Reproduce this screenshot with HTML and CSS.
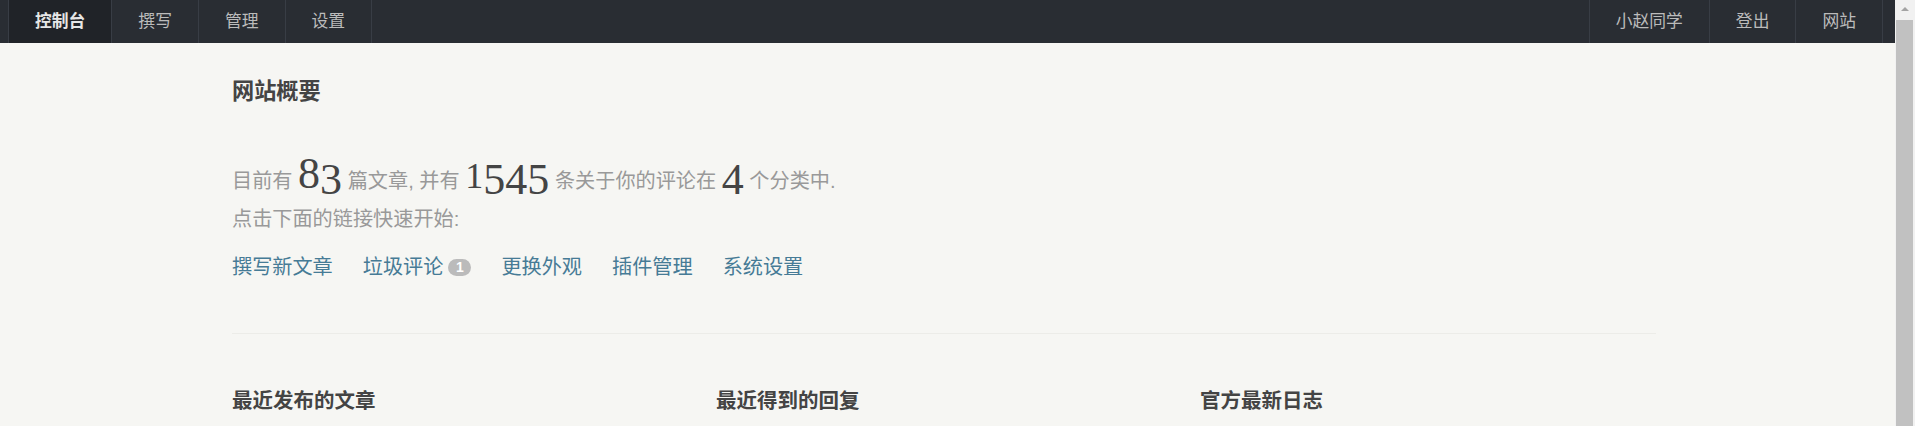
FILE: index.html
```html
<!DOCTYPE html>
<html lang="zh-CN">
<head>
<meta charset="utf-8">
<title>控制台</title>
<link rel="stylesheet" href="styles.css">
</head>
<body>
<div class="page">
  <header class="topnav">
    <ul class="nav-list">
      <li class="nav-item is-active"><a href="#">控制台</a></li>
      <li class="nav-item"><a href="#">撰写</a></li>
      <li class="nav-item"><a href="#">管理</a></li>
      <li class="nav-item"><a href="#">设置</a></li>
    </ul>
    <ul class="nav-list">
      <li class="nav-item"><a href="#">小赵同学</a></li>
      <li class="nav-item"><a href="#">登出</a></li>
      <li class="nav-item"><a href="#">网站</a></li>
    </ul>
  </header>
  <main class="container">
    <h2 class="page-title">网站概要</h2>
    <div class="welcome">
      <p class="welcome-line">目前有 <em class="stat">8<span class="os">3</span></em> 篇文章, 并有 <em class="stat"><span class="os-short">1</span><span class="os">545</span></em> 条关于你的评论在 <em class="stat"><span class="os">4</span></em> 个分类中.</p>
      <p class="welcome-line">点击下面的链接快速开始:</p>
    </div>
    <ul class="start-links">
      <li><a href="#">撰写新文章</a></li>
      <li><a href="#">垃圾评论</a><span class="badge">1</span></li>
      <li><a href="#">更换外观</a></li>
      <li><a href="#">插件管理</a></li>
      <li><a href="#">系统设置</a></li>
    </ul>
    <hr class="divider">
    <section class="columns">
      <div class="col"><h3 class="col-title">最近发布的文章</h3></div>
      <div class="col"><h3 class="col-title">最近得到的回复</h3></div>
      <div class="col"><h3 class="col-title">官方最新日志</h3></div>
    </section>
  </main>
</div>
<div class="scrollbar" aria-hidden="true">
  <div class="sb-button"><span class="sb-arrow"></span></div>
  <div class="sb-thumb"></div>
</div>
</body>
</html>
```

FILE: styles.css
```css
html, body {
  margin: 0;
  padding: 0;
}
body {
  display: flex;
  align-items: flex-start;
  background: #F6F6F3;
  color: #444;
  font-family: "Liberation Sans", "Noto Sans CJK SC", sans-serif;
  font-size: 16.8px;
}
ul {
  list-style: none;
  margin: 0;
  padding: 0;
}
a {
  text-decoration: none;
}
.page {
  flex: 1;
  min-width: 0;
}

/* scrollbar column */
.scrollbar {
  flex: 0 0 20px;
  height: 100vh;
  display: flex;
  flex-direction: column;
  background: #F1F1F1;
}
.sb-button {
  height: 20px;
  display: flex;
  align-items: center;
  justify-content: center;
}
.sb-arrow {
  width: 0;
  height: 0;
  border-left: 4px solid transparent;
  border-right: 4px solid transparent;
  border-bottom: 4px solid #A3A3A3;
  margin-top: -2px;
}
.sb-thumb {
  flex: 1;
  margin: 0 2px 0 1px;
  background: #C1C1C1;
}

/* top navigation */
.topnav {
  display: flex;
  justify-content: space-between;
  background: #292D33;
  height: 43px;
  padding: 0 12px 0 8px;
}
.nav-list {
  display: flex;
  border-right: 1px solid #383D45;
}
.nav-item a {
  display: block;
  padding: 0 26px;
  line-height: 43px;
  height: 43px;
  font-size: 16.8px;
  color: #BBB;
  border-left: 1px solid #383D45;
}
.nav-item.is-active a {
  background: #202328;
  color: #E6E6E6;
  font-weight: bold;
}

/* content */
.container {
  width: 1424px;
  margin: 0 auto;
  padding-right: 7px;
}
.page-title {
  margin: 36px 0 0;
  font-size: 22.2px;
  line-height: 26px;
  font-weight: bold;
  color: #444;
}
.welcome {
  margin-top: 57px;
  color: #999;
  font-size: 20.16px;
}
.welcome-line {
  margin: 0;
  line-height: 38px;
  height: 38px;
}
.stat {
  font-style: normal;
  font-family: "Liberation Serif", "DejaVu Serif", serif;
  font-size: 44px;
  line-height: 0;
  color: #444;
}
.os {
  vertical-align: -0.13em;
}
.os-short {
  font-size: 0.82em;
}
.start-links {
  display: flex;
  gap: 30px;
  margin-top: 14px;
  font-size: 20.16px;
  line-height: 30px;
}
.start-links li {
  display: flex;
  align-items: center;
}
.start-links a {
  color: #467B96;
}
.badge {
  display: inline-block;
  margin-left: 5px;
  min-width: 23px;
  height: 17px;
  line-height: 17px;
  border-radius: 9px;
  background: #BBB;
  color: #FFF;
  font-size: 14px;
  font-weight: bold;
  text-align: center;
}
.divider {
  margin: 51px 0 0;
  border: 0;
  border-top: 1px solid #ECECE8;
  height: 0;
}
.columns {
  display: grid;
  grid-template-columns: repeat(3, 1fr);
  column-gap: 28px;
  margin-top: 54px;
}
.col-title {
  margin: 0;
  font-size: 20.5px;
  line-height: 26px;
  font-weight: bold;
  color: #444;
}
```
